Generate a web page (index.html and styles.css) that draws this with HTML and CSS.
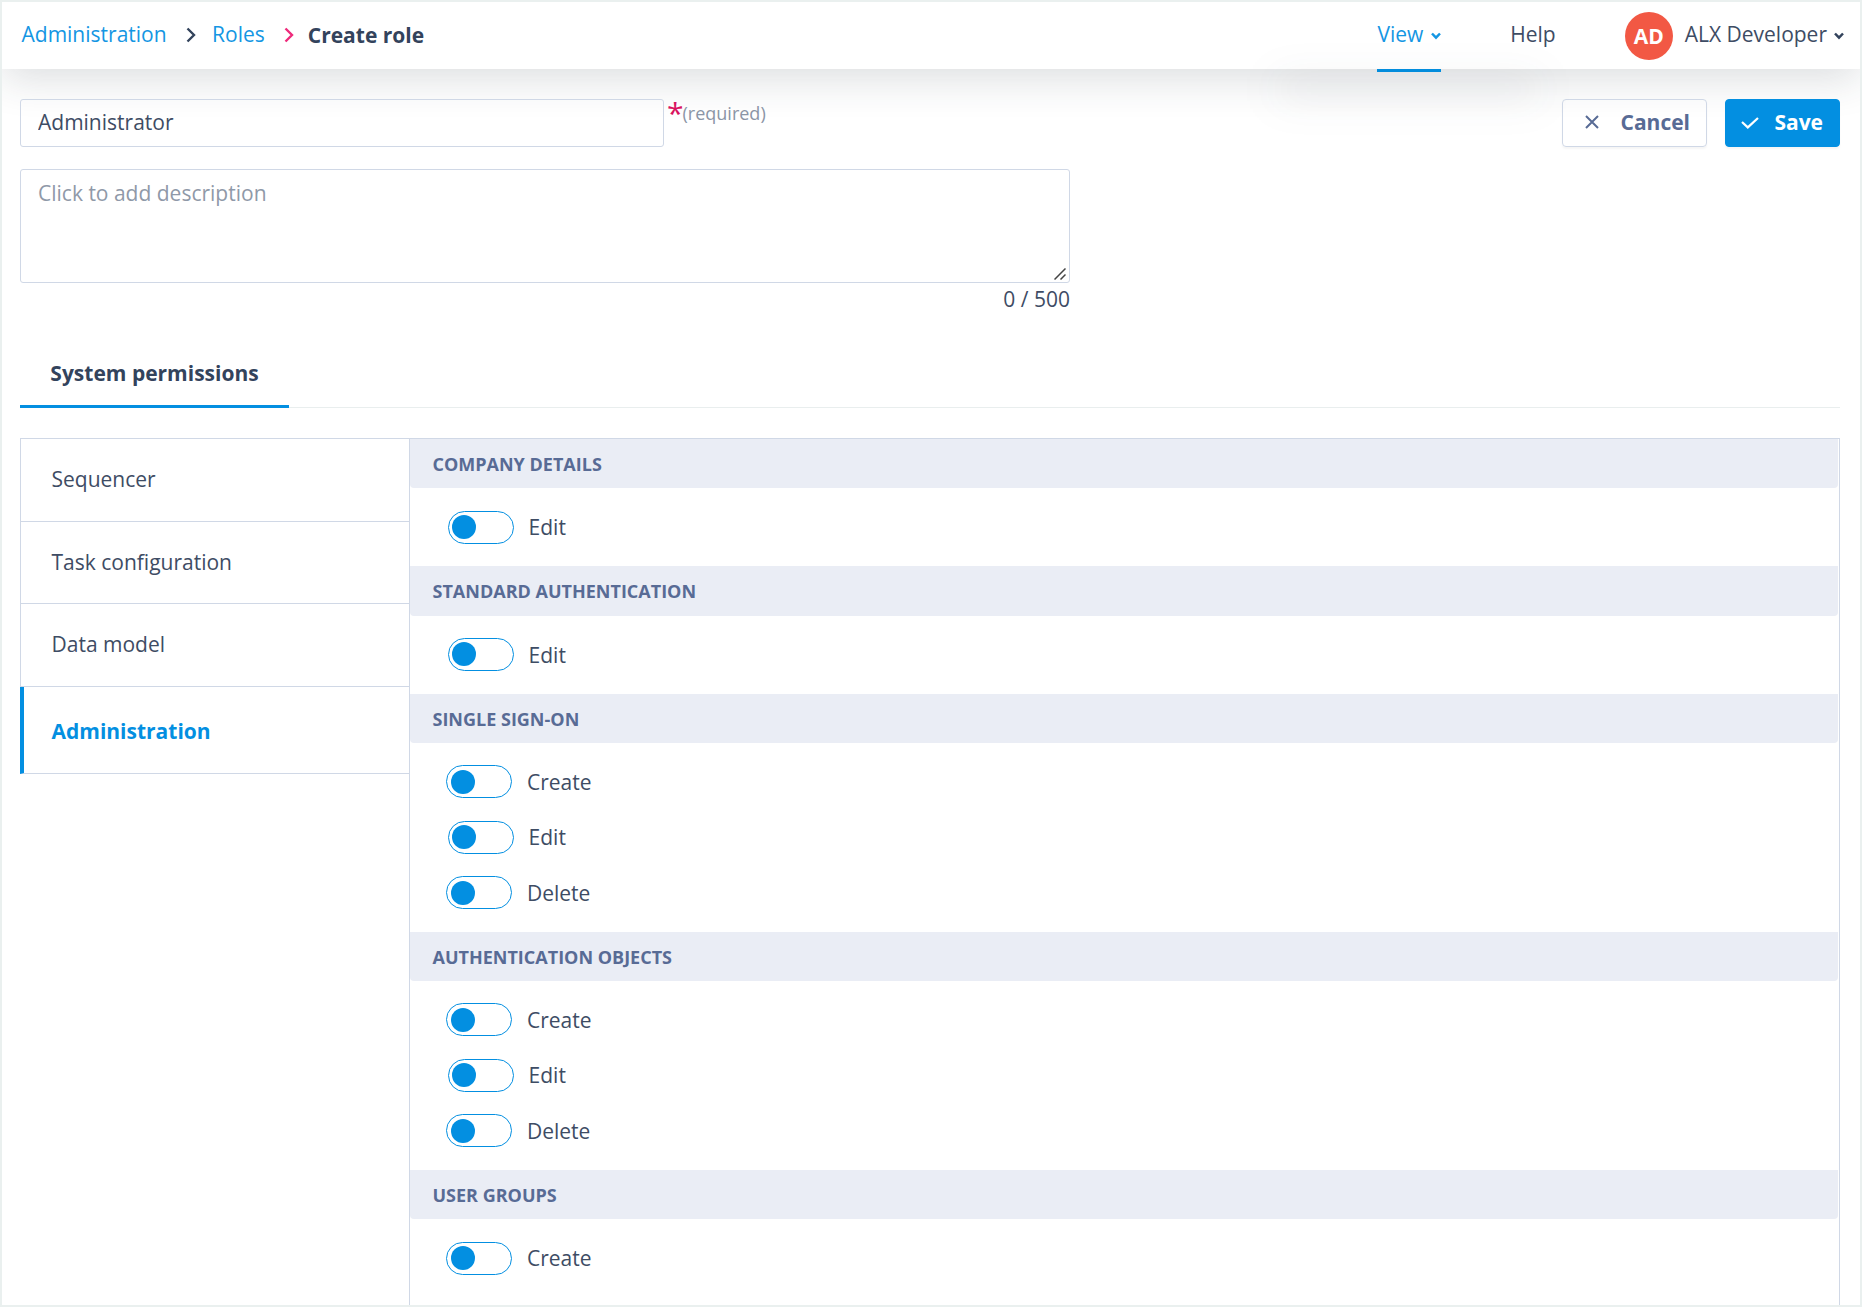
FILE: index.html
```html
<!DOCTYPE html>
<html lang="en">
<head>
    <meta charset="UTF-8">
    <meta name="viewport" content="width=device-width, initial-scale=1.0">
    <title>Create role</title>
    <link rel="stylesheet" href="styles.css">
</head>
<body>
    <div class="page">
        <header class="header">
            <nav class="breadcrumb">
                <a href="#">Administration</a>
                <svg class="crumb-arrow" viewBox="0 0 10 16"><path d="M1.5 1.5 L8 8 L1.5 14.5"/></svg>
                <a href="#">Roles</a>
                <svg class="crumb-arrow pink" viewBox="0 0 10 16"><path d="M1.5 1.5 L8 8 L1.5 14.5"/></svg>
                <span class="current">Create role</span>
            </nav>
            <div class="menu">
                <a href="#" class="menu-item active">View <svg class="caret" viewBox="0 0 10 8"><path d="M1 1.5 L5 5.7 L9 1.5"/></svg></a>
                <a href="#" class="menu-item help">Help</a>
                <span class="avatar">AD</span>
                <a href="#" class="menu-item user">ALX Developer <svg class="caret" viewBox="0 0 10 8"><path d="M1 1.5 L5 5.7 L9 1.5"/></svg></a>
            </div>
        </header>

        <main class="content">
            <div class="title-row">
                <input type="text" class="name-input" value="Administrator">
                <span class="star">*</span>
                <span class="required">(required)</span>
                <div class="actions">
                    <button class="btn cancel"><svg class="icon-x" viewBox="0 0 14 14"><path d="M1 1 L13 13 M13 1 L1 13"/></svg>Cancel</button>
                    <button class="btn save"><svg class="icon-check" viewBox="0 0 18 12"><path d="M1 5 L6.8 10.4 L17 1"/></svg>Save</button>
                </div>
            </div>
            <div class="description-box">
                <textarea class="description" placeholder="Click to add description"></textarea>
                <svg class="grip" viewBox="0 0 12 12"><path d="M0.5 11.5 L11.5 0.5 M6.5 11.5 L11.5 6.5"/></svg>
                <div class="counter">0 / 500</div>
            </div>

            <div class="tabs"><div class="tab">System permissions</div></div>

            <div class="permissions">
                <ul class="sidebar">
                    <li>Sequencer</li>
                    <li>Task configuration</li>
                    <li>Data model</li>
                    <li class="active">Administration</li>
                </ul>
                <div class="panel">
                    <section>
                        <h3>COMPANY DETAILS</h3>
                        <label class="toggle edit"><span class="switch"></span>Edit</label>
                    </section>
                    <section>
                        <h3>STANDARD AUTHENTICATION</h3>
                        <label class="toggle edit"><span class="switch"></span>Edit</label>
                    </section>
                    <section>
                        <h3>SINGLE SIGN-ON</h3>
                        <label class="toggle"><span class="switch"></span>Create</label>
                        <label class="toggle edit"><span class="switch"></span>Edit</label>
                        <label class="toggle"><span class="switch"></span>Delete</label>
                    </section>
                    <section>
                        <h3>AUTHENTICATION OBJECTS</h3>
                        <label class="toggle"><span class="switch"></span>Create</label>
                        <label class="toggle edit"><span class="switch"></span>Edit</label>
                        <label class="toggle"><span class="switch"></span>Delete</label>
                    </section>
                    <section>
                        <h3>USER GROUPS</h3>
                        <label class="toggle"><span class="switch"></span>Create</label>
                    </section>
                </div>
            </div>
        </main>
    </div>
</body>
</html>
```
FILE: styles.css
```css
* { box-sizing: border-box; }
body { margin: 0; font-family: "Open Sans", sans-serif; font-size: 21px; line-height: 30px; color: #3e4c64; background-color: #fff; }
a { color: inherit; text-decoration: none; }
svg { fill: none; stroke: currentColor; flex: none; }
.page { height: 1307px; border: 2px solid #eaf0ef; overflow: hidden; display: flex; flex-direction: column; }

/* Header */
.header { flex: none; height: 67px; display: flex; justify-content: space-between; background-color: #fff; box-shadow: 0 10px 40px rgba(40, 48, 60, 0.16); }
.breadcrumb { display: flex; align-items: center; height: 63px; padding-left: 19.5px; color: #1496e3; }
.crumb-arrow { width: 10px; height: 16px; margin: 3px 16px 0 19.5px; stroke-width: 2.4; color: #33435c; }
.crumb-arrow.pink { color: #ee2a7b; margin: 3px 14px 0 19px; }
.current { font-weight: 700; color: #33435c; padding-top: 2px; }
.menu { display: flex; align-items: center; padding-right: 16px; }
.menu-item { display: flex; align-items: center; padding-bottom: 4px; white-space: nowrap; }
.menu-item.active { position: relative; height: 67px; margin-right: 69px; color: #1496e3; }
.menu-item.active::before { content: ""; position: absolute; left: 0; bottom: -3px; width: 100%; height: 3px; background-color: #038fe1; }
.menu-item.active::after { content: ""; position: absolute; left: -100px; top: 82px; width: 262px; height: 10px; background-color: rgba(40, 48, 60, 0.16); filter: blur(20px); pointer-events: none; }
.help { margin-right: 69px; }
.avatar { width: 48px; height: 48px; margin: 1px 12px 0 0; border-radius: 50%; background-color: #f25844; color: #fff; font-weight: 700; line-height: 49px; text-align: center; }
.caret { width: 10px; height: 8px; margin: 5px 0 0 8px; stroke-width: 2.5; }
.user .caret { margin-left: 7px; color: #33435c; }

/* Form */
.content { flex: 1; min-height: 0; padding: 30px 20px 0 18px; }
.title-row { display: flex; align-items: flex-start; height: 48px; }
.name-input, .description { font: inherit; color: inherit; border: 1px solid #d0d8e6; border-radius: 3px; outline: none; background-color: transparent; }
.name-input { width: 644px; height: 48px; padding: 0 17px 2px; }
.star { margin-left: 3px; font-size: 30px; line-height: 28px; color: #d9125f; }
.required { margin-left: -1px; font-size: 18px; line-height: 28px; color: #8b95a6; }
.actions { display: flex; gap: 18px; margin-left: auto; }
.btn { display: flex; align-items: center; height: 48px; padding: 0 16px 2px 22px; font: inherit; font-weight: 700; border: 1px solid #d0d8e6; border-radius: 4px; background-color: transparent; color: #586b95; box-shadow: 0 2px 2px rgba(0, 0, 0, 0.04); }
.cancel { width: 145px; justify-content: space-between; }
.save { width: 115px; padding: 0 16px 2px 15px; justify-content: space-between; background-color: #038fe1; border-color: #038fe1; color: #fff; }
.icon-x { width: 14px; height: 14px; stroke-width: 2; }
.icon-check { width: 18px; height: 12px; margin-top: 1px; stroke-width: 2.2; }
.description-box { position: relative; width: 1050px; margin-top: 22px; }
.description { display: block; width: 100%; height: 114px; padding: 8px 17px; resize: none; }
.description::placeholder { color: #8f99a8; opacity: 1; }
.grip { position: absolute; right: 4px; top: 99px; width: 12px; height: 12px; stroke-width: 1.5; color: #444; }
.counter { text-align: right; line-height: 32px; }

/* Tabs */
.tabs { display: flex; height: 93px; border-bottom: 1px solid #e9eeee; }
.tab { width: 269px; height: 93px; padding-top: 43px; text-align: center; font-weight: 700; color: #33435c; border-bottom: 3px solid #038fe1; }

/* Permissions */
.permissions { display: flex; height: 900px; margin-top: 30px; border-top: 1px solid #d0d8e6; border-right: 1px solid #d0d8e6; }
.sidebar { width: 389px; margin: 0; padding: 0; list-style: none; }
.sidebar li { height: 82.5px; padding: 0 30.5px 1px; border-left: 1px solid #d0d8e6; border-bottom: 1px solid #d0d8e6; line-height: 81px; }
.sidebar .active { height: 87.5px; padding-left: 27.5px; border-left: 4px solid #038fe1; font-weight: 700; color: #038fe1; line-height: 89px; }
.panel { flex: 1; padding-right: 1px; border-left: 1px solid #d0d8e6; }
.panel section { padding-bottom: 11.3px; }
.panel h3 { height: 49.3px; margin: 0 0 11.25px; padding-left: 22.5px; font-size: 18px; line-height: 50px; color: #586b95; background-color: #eaedf5; border-radius: 0 0 4px 4px; }
.toggle { display: flex; align-items: center; height: 55.45px; padding-left: 36.4px; }
.toggle.edit { padding-left: 38px; }
.switch { width: 66px; height: 33px; margin-right: 14.6px; padding: 3.3px; border: 1px solid #038fe1; border-radius: 17px; }
.switch::before { content: ""; display: block; width: 24px; height: 24px; border-radius: 50%; background-color: #038fe1; }
```
